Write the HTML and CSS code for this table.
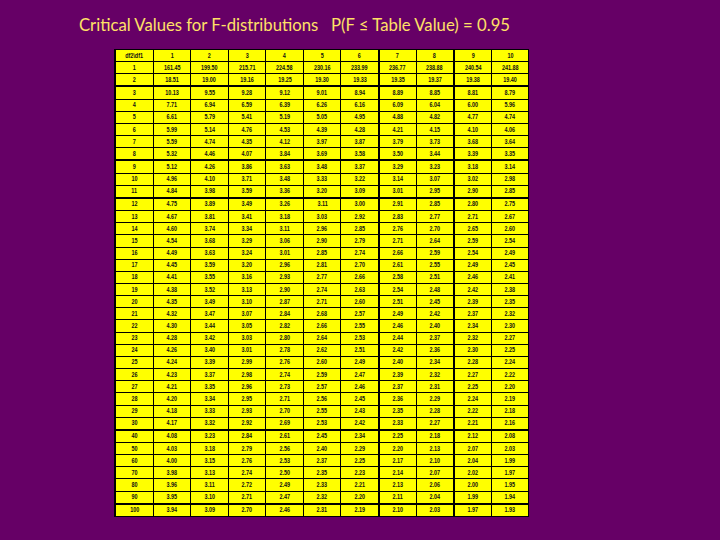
FILE: index.html
```html
<!DOCTYPE html>
<html>
<head>
<meta charset="utf-8">
<link rel="stylesheet" href="styles.css">
</head>
<body>
<div class="slide">
<h1 class="title">Critical Values for F-distributions   P(F ≤ Table Value) = 0.95</h1>
<table class="ft">
<colgroup><col class="c0"><col span="10" class="cn"></colgroup>
<tr><td><span>df2\df1</span></td><td><span>1</span></td><td><span>2</span></td><td><span>3</span></td><td><span>4</span></td><td><span>5</span></td><td><span>6</span></td><td class="vk"><span>7</span></td><td><span>8</span></td><td class="vk"><span>9</span></td><td><span>10</span></td></tr>
<tr><td><span>1</span></td><td><span>161.45</span></td><td><span>199.50</span></td><td><span>215.71</span></td><td><span>224.58</span></td><td><span>230.16</span></td><td><span>233.99</span></td><td class="vk"><span>236.77</span></td><td><span>238.88</span></td><td class="vk"><span>240.54</span></td><td><span>241.88</span></td></tr>
<tr><td><span>2</span></td><td><span>18.51</span></td><td><span>19.00</span></td><td><span>19.16</span></td><td><span>19.25</span></td><td><span>19.30</span></td><td><span>19.33</span></td><td class="vk"><span>19.35</span></td><td><span>19.37</span></td><td class="vk"><span>19.38</span></td><td><span>19.40</span></td></tr>
<tr class="tk"><td><span>3</span></td><td><span>10.13</span></td><td><span>9.55</span></td><td><span>9.28</span></td><td><span>9.12</span></td><td><span>9.01</span></td><td><span>8.94</span></td><td class="vk"><span>8.89</span></td><td><span>8.85</span></td><td class="vk"><span>8.81</span></td><td><span>8.79</span></td></tr>
<tr><td><span>4</span></td><td><span>7.71</span></td><td><span>6.94</span></td><td><span>6.59</span></td><td><span>6.39</span></td><td><span>6.26</span></td><td><span>6.16</span></td><td class="vk"><span>6.09</span></td><td><span>6.04</span></td><td class="vk"><span>6.00</span></td><td><span>5.96</span></td></tr>
<tr><td><span>5</span></td><td><span>6.61</span></td><td><span>5.79</span></td><td><span>5.41</span></td><td><span>5.19</span></td><td><span>5.05</span></td><td><span>4.95</span></td><td class="vk"><span>4.88</span></td><td><span>4.82</span></td><td class="vk"><span>4.77</span></td><td><span>4.74</span></td></tr>
<tr><td><span>6</span></td><td><span>5.99</span></td><td><span>5.14</span></td><td><span>4.76</span></td><td><span>4.53</span></td><td><span>4.39</span></td><td><span>4.28</span></td><td class="vk"><span>4.21</span></td><td><span>4.15</span></td><td class="vk"><span>4.10</span></td><td><span>4.06</span></td></tr>
<tr><td><span>7</span></td><td><span>5.59</span></td><td><span>4.74</span></td><td><span>4.35</span></td><td><span>4.12</span></td><td><span>3.97</span></td><td><span>3.87</span></td><td class="vk"><span>3.79</span></td><td><span>3.73</span></td><td class="vk"><span>3.68</span></td><td><span>3.64</span></td></tr>
<tr><td><span>8</span></td><td><span>5.32</span></td><td><span>4.46</span></td><td><span>4.07</span></td><td><span>3.84</span></td><td><span>3.69</span></td><td><span>3.58</span></td><td class="vk"><span>3.50</span></td><td><span>3.44</span></td><td class="vk"><span>3.39</span></td><td><span>3.35</span></td></tr>
<tr class="tk"><td><span>9</span></td><td><span>5.12</span></td><td><span>4.26</span></td><td><span>3.86</span></td><td><span>3.63</span></td><td><span>3.48</span></td><td><span>3.37</span></td><td class="vk"><span>3.29</span></td><td><span>3.23</span></td><td class="vk"><span>3.18</span></td><td><span>3.14</span></td></tr>
<tr><td><span>10</span></td><td><span>4.96</span></td><td><span>4.10</span></td><td><span>3.71</span></td><td><span>3.48</span></td><td><span>3.33</span></td><td><span>3.22</span></td><td class="vk"><span>3.14</span></td><td><span>3.07</span></td><td class="vk"><span>3.02</span></td><td><span>2.98</span></td></tr>
<tr><td><span>11</span></td><td><span>4.84</span></td><td><span>3.98</span></td><td><span>3.59</span></td><td><span>3.36</span></td><td><span>3.20</span></td><td><span>3.09</span></td><td class="vk"><span>3.01</span></td><td><span>2.95</span></td><td class="vk"><span>2.90</span></td><td><span>2.85</span></td></tr>
<tr class="tk"><td><span>12</span></td><td><span>4.75</span></td><td><span>3.89</span></td><td><span>3.49</span></td><td><span>3.26</span></td><td><span>3.11</span></td><td><span>3.00</span></td><td class="vk"><span>2.91</span></td><td><span>2.85</span></td><td class="vk"><span>2.80</span></td><td><span>2.75</span></td></tr>
<tr><td><span>13</span></td><td><span>4.67</span></td><td><span>3.81</span></td><td><span>3.41</span></td><td><span>3.18</span></td><td><span>3.03</span></td><td><span>2.92</span></td><td class="vk"><span>2.83</span></td><td><span>2.77</span></td><td class="vk"><span>2.71</span></td><td><span>2.67</span></td></tr>
<tr><td><span>14</span></td><td><span>4.60</span></td><td><span>3.74</span></td><td><span>3.34</span></td><td><span>3.11</span></td><td><span>2.96</span></td><td><span>2.85</span></td><td class="vk"><span>2.76</span></td><td><span>2.70</span></td><td class="vk"><span>2.65</span></td><td><span>2.60</span></td></tr>
<tr><td><span>15</span></td><td><span>4.54</span></td><td><span>3.68</span></td><td><span>3.29</span></td><td><span>3.06</span></td><td><span>2.90</span></td><td><span>2.79</span></td><td class="vk"><span>2.71</span></td><td><span>2.64</span></td><td class="vk"><span>2.59</span></td><td><span>2.54</span></td></tr>
<tr><td><span>16</span></td><td><span>4.49</span></td><td><span>3.63</span></td><td><span>3.24</span></td><td><span>3.01</span></td><td><span>2.85</span></td><td><span>2.74</span></td><td class="vk"><span>2.66</span></td><td><span>2.59</span></td><td class="vk"><span>2.54</span></td><td><span>2.49</span></td></tr>
<tr><td><span>17</span></td><td><span>4.45</span></td><td><span>3.59</span></td><td><span>3.20</span></td><td><span>2.96</span></td><td><span>2.81</span></td><td><span>2.70</span></td><td class="vk"><span>2.61</span></td><td><span>2.55</span></td><td class="vk"><span>2.49</span></td><td><span>2.45</span></td></tr>
<tr><td><span>18</span></td><td><span>4.41</span></td><td><span>3.55</span></td><td><span>3.16</span></td><td><span>2.93</span></td><td><span>2.77</span></td><td><span>2.66</span></td><td class="vk"><span>2.58</span></td><td><span>2.51</span></td><td class="vk"><span>2.46</span></td><td><span>2.41</span></td></tr>
<tr><td><span>19</span></td><td><span>4.38</span></td><td><span>3.52</span></td><td><span>3.13</span></td><td><span>2.90</span></td><td><span>2.74</span></td><td><span>2.63</span></td><td class="vk"><span>2.54</span></td><td><span>2.48</span></td><td class="vk"><span>2.42</span></td><td><span>2.38</span></td></tr>
<tr><td><span>20</span></td><td><span>4.35</span></td><td><span>3.49</span></td><td><span>3.10</span></td><td><span>2.87</span></td><td><span>2.71</span></td><td><span>2.60</span></td><td class="vk"><span>2.51</span></td><td><span>2.45</span></td><td class="vk"><span>2.39</span></td><td><span>2.35</span></td></tr>
<tr><td><span>21</span></td><td><span>4.32</span></td><td><span>3.47</span></td><td><span>3.07</span></td><td><span>2.84</span></td><td><span>2.68</span></td><td><span>2.57</span></td><td class="vk"><span>2.49</span></td><td><span>2.42</span></td><td class="vk"><span>2.37</span></td><td><span>2.32</span></td></tr>
<tr><td><span>22</span></td><td><span>4.30</span></td><td><span>3.44</span></td><td><span>3.05</span></td><td><span>2.82</span></td><td><span>2.66</span></td><td><span>2.55</span></td><td class="vk"><span>2.46</span></td><td><span>2.40</span></td><td class="vk"><span>2.34</span></td><td><span>2.30</span></td></tr>
<tr><td><span>23</span></td><td><span>4.28</span></td><td><span>3.42</span></td><td><span>3.03</span></td><td><span>2.80</span></td><td><span>2.64</span></td><td><span>2.53</span></td><td class="vk"><span>2.44</span></td><td><span>2.37</span></td><td class="vk"><span>2.32</span></td><td><span>2.27</span></td></tr>
<tr><td><span>24</span></td><td><span>4.26</span></td><td><span>3.40</span></td><td><span>3.01</span></td><td><span>2.78</span></td><td><span>2.62</span></td><td><span>2.51</span></td><td class="vk"><span>2.42</span></td><td><span>2.36</span></td><td class="vk"><span>2.30</span></td><td><span>2.25</span></td></tr>
<tr><td><span>25</span></td><td><span>4.24</span></td><td><span>3.39</span></td><td><span>2.99</span></td><td><span>2.76</span></td><td><span>2.60</span></td><td><span>2.49</span></td><td class="vk"><span>2.40</span></td><td><span>2.34</span></td><td class="vk"><span>2.28</span></td><td><span>2.24</span></td></tr>
<tr><td><span>26</span></td><td><span>4.23</span></td><td><span>3.37</span></td><td><span>2.98</span></td><td><span>2.74</span></td><td><span>2.59</span></td><td><span>2.47</span></td><td class="vk"><span>2.39</span></td><td><span>2.32</span></td><td class="vk"><span>2.27</span></td><td><span>2.22</span></td></tr>
<tr><td><span>27</span></td><td><span>4.21</span></td><td><span>3.35</span></td><td><span>2.96</span></td><td><span>2.73</span></td><td><span>2.57</span></td><td><span>2.46</span></td><td class="vk"><span>2.37</span></td><td><span>2.31</span></td><td class="vk"><span>2.25</span></td><td><span>2.20</span></td></tr>
<tr><td><span>28</span></td><td><span>4.20</span></td><td><span>3.34</span></td><td><span>2.95</span></td><td><span>2.71</span></td><td><span>2.56</span></td><td><span>2.45</span></td><td class="vk"><span>2.36</span></td><td><span>2.29</span></td><td class="vk"><span>2.24</span></td><td><span>2.19</span></td></tr>
<tr><td><span>29</span></td><td><span>4.18</span></td><td><span>3.33</span></td><td><span>2.93</span></td><td><span>2.70</span></td><td><span>2.55</span></td><td><span>2.43</span></td><td class="vk"><span>2.35</span></td><td><span>2.28</span></td><td class="vk"><span>2.22</span></td><td><span>2.18</span></td></tr>
<tr><td><span>30</span></td><td><span>4.17</span></td><td><span>3.32</span></td><td><span>2.92</span></td><td><span>2.69</span></td><td><span>2.53</span></td><td><span>2.42</span></td><td class="vk"><span>2.33</span></td><td><span>2.27</span></td><td class="vk"><span>2.21</span></td><td><span>2.16</span></td></tr>
<tr class="tk"><td><span>40</span></td><td><span>4.08</span></td><td><span>3.23</span></td><td><span>2.84</span></td><td><span>2.61</span></td><td><span>2.45</span></td><td><span>2.34</span></td><td class="vk"><span>2.25</span></td><td><span>2.18</span></td><td class="vk"><span>2.12</span></td><td><span>2.08</span></td></tr>
<tr><td><span>50</span></td><td><span>4.03</span></td><td><span>3.18</span></td><td><span>2.79</span></td><td><span>2.56</span></td><td><span>2.40</span></td><td><span>2.29</span></td><td class="vk"><span>2.20</span></td><td><span>2.13</span></td><td class="vk"><span>2.07</span></td><td><span>2.03</span></td></tr>
<tr><td><span>60</span></td><td><span>4.00</span></td><td><span>3.15</span></td><td><span>2.76</span></td><td><span>2.53</span></td><td><span>2.37</span></td><td><span>2.25</span></td><td class="vk"><span>2.17</span></td><td><span>2.10</span></td><td class="vk"><span>2.04</span></td><td><span>1.99</span></td></tr>
<tr><td><span>70</span></td><td><span>3.98</span></td><td><span>3.13</span></td><td><span>2.74</span></td><td><span>2.50</span></td><td><span>2.35</span></td><td><span>2.23</span></td><td class="vk"><span>2.14</span></td><td><span>2.07</span></td><td class="vk"><span>2.02</span></td><td><span>1.97</span></td></tr>
<tr><td><span>80</span></td><td><span>3.96</span></td><td><span>3.11</span></td><td><span>2.72</span></td><td><span>2.49</span></td><td><span>2.33</span></td><td><span>2.21</span></td><td class="vk"><span>2.13</span></td><td><span>2.06</span></td><td class="vk"><span>2.00</span></td><td><span>1.95</span></td></tr>
<tr><td><span>90</span></td><td><span>3.95</span></td><td><span>3.10</span></td><td><span>2.71</span></td><td><span>2.47</span></td><td><span>2.32</span></td><td><span>2.20</span></td><td class="vk"><span>2.11</span></td><td><span>2.04</span></td><td class="vk"><span>1.99</span></td><td><span>1.94</span></td></tr>
<tr class="tk"><td><span>100</span></td><td><span>3.94</span></td><td><span>3.09</span></td><td><span>2.70</span></td><td><span>2.46</span></td><td><span>2.31</span></td><td><span>2.19</span></td><td class="vk"><span>2.10</span></td><td><span>2.03</span></td><td class="vk"><span>1.97</span></td><td><span>1.93</span></td></tr>
</table>
</div>
</body>
</html>
```
FILE: styles.css
```css
html, body {
  margin: 0;
  padding: 0;
  background: #660066;
}
.slide {
  width: 720px;
  height: 540px;
  padding-top: 14px;
  box-sizing: border-box;
  background: #660066;
}
.title {
  margin: 0 0 0 79px;
  font-family: Lato, "Liberation Sans", sans-serif;
  font-weight: normal;
  font-size: 16.7px;
  line-height: 22px;
  color: #ffe066;
  white-space: pre;
}
.ft {
  margin: 13px 0 0 114px;
  border-collapse: collapse;
  table-layout: fixed;
  width: 414px;
  background: #ffff00;
  border-left: 2px solid #000;
}
.c0 { width: 38px; }
.cn { width: 37.6px; }
.ft td {
  border: 1px solid #000;
  padding: 0;
  height: 11.17px;
  text-align: center;
  vertical-align: middle;
  font-family: "Liberation Sans", Arial, sans-serif;
  font-weight: bold;
  font-size: 8px;
  line-height: 8px;
  color: #111;
  overflow: hidden;
  white-space: nowrap;
}
.ft td span {
  display: inline-block;
  transform: scaleX(0.68);
}
.ft tr.tk td { border-top-width: 2px; }
.ft td.vk { border-left-width: 2px; }
```
